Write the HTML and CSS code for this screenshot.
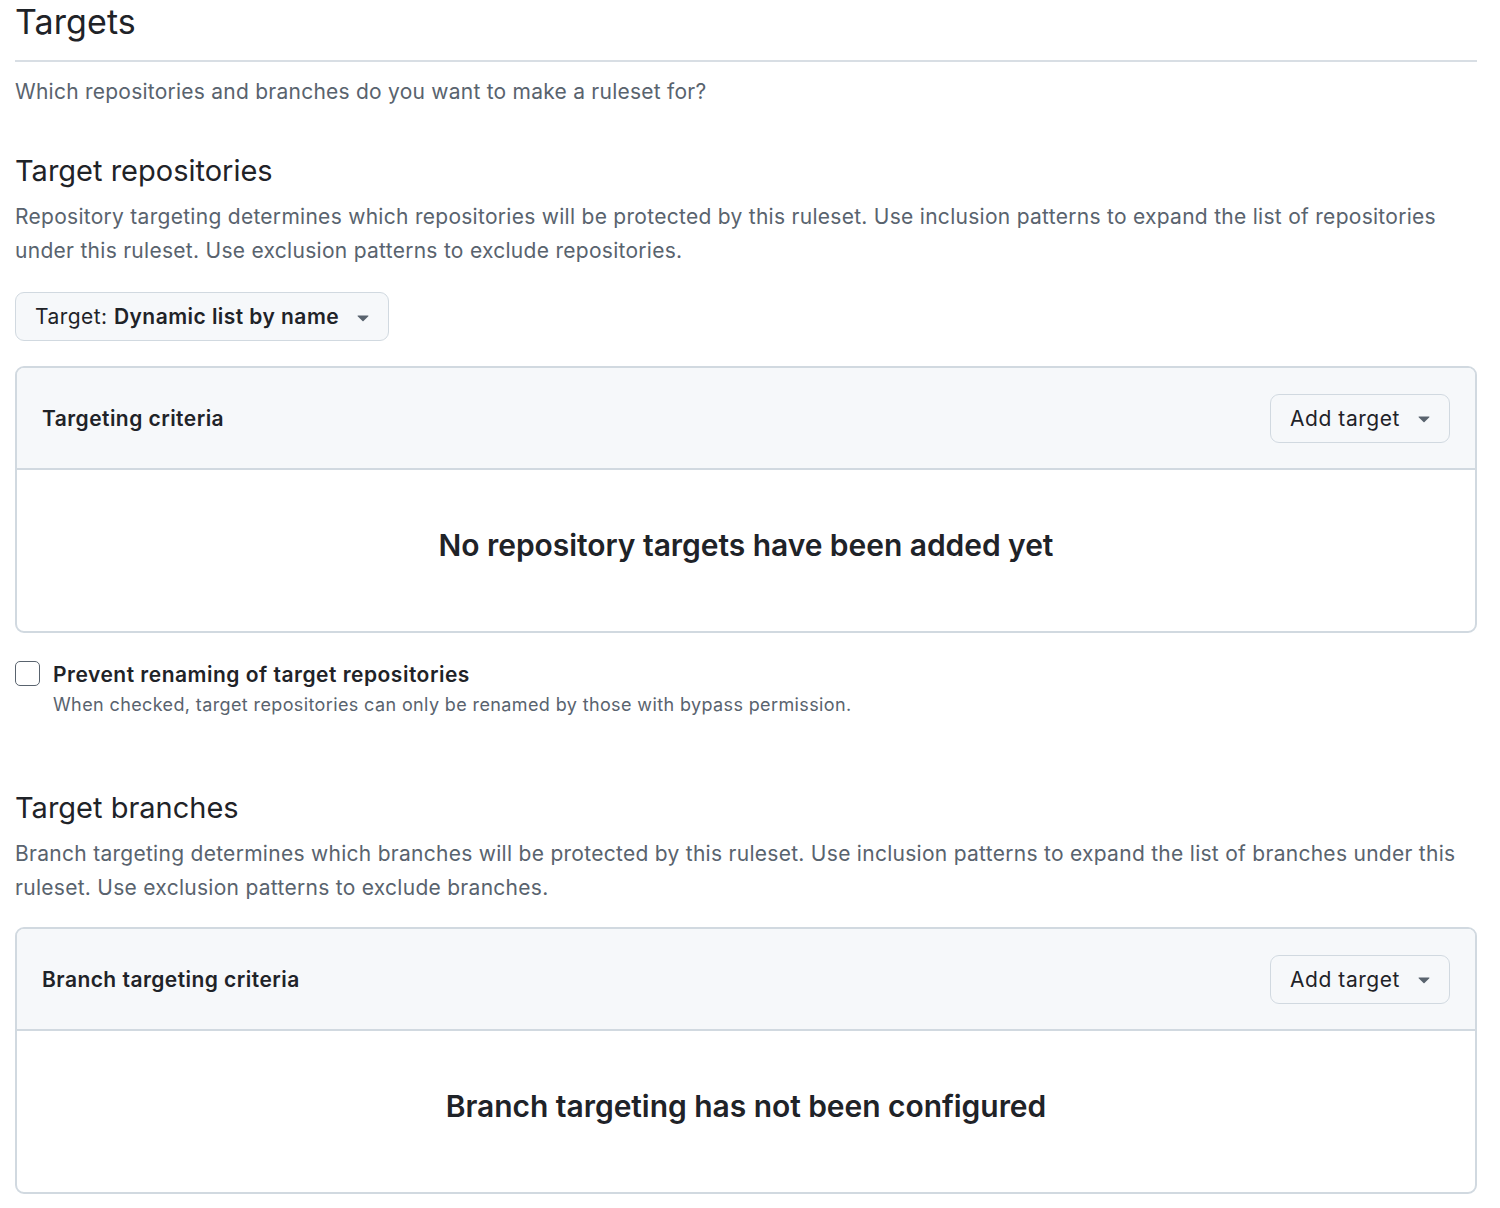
FILE: index.html
```html
<!DOCTYPE html>
<html lang="en">
<head>
<meta charset="utf-8">
<title>Targets</title>
<link rel="stylesheet" href="styles.css">
</head>
<body>
<main class="page">
  <header class="subhead">
    <h1 class="subhead-title">Targets</h1>
  </header>
  <p class="lead">Which repositories and branches do you want to make a ruleset for?</p>

  <section class="section">
    <h2 class="section-title">Target repositories</h2>
    <p class="section-desc">Repository targeting determines which repositories will be protected by this ruleset. Use inclusion patterns to expand the list of repositories under this ruleset. Use exclusion patterns to exclude repositories.</p>

    <button class="btn btn-target" type="button">
      <span>Target: <strong>Dynamic list by name</strong></span>
      <svg class="caret" viewBox="0 0 16 16" width="24" height="24" aria-hidden="true"><path d="m4.427 7.427 3.396 3.396a.25.25 0 0 0 .354 0l3.396-3.396A.25.25 0 0 0 11.396 7H4.604a.25.25 0 0 0-.177.427Z"/></svg>
    </button>

    <div class="panel">
      <div class="panel-head">
        <h3 class="panel-title">Targeting criteria</h3>
        <button class="btn btn-add" type="button">
          <span>Add target</span>
          <svg class="caret" viewBox="0 0 16 16" width="24" height="24" aria-hidden="true"><path d="m4.427 7.427 3.396 3.396a.25.25 0 0 0 .354 0l3.396-3.396A.25.25 0 0 0 11.396 7H4.604a.25.25 0 0 0-.177.427Z"/></svg>
        </button>
      </div>
      <div class="panel-body">
        <p class="blank-title">No repository targets have been added yet</p>
      </div>
    </div>

    <label class="check">
      <span class="check-box"></span>
      <span class="check-text">
        <span class="check-label">Prevent renaming of target repositories</span>
        <span class="check-hint">When checked, target repositories can only be renamed by those with bypass permission.</span>
      </span>
    </label>
  </section>

  <section class="section section-branches">
    <h2 class="section-title">Target branches</h2>
    <p class="section-desc">Branch targeting determines which branches will be protected by this ruleset. Use inclusion patterns to expand the list of branches under this ruleset. Use exclusion patterns to exclude branches.</p>

    <div class="panel">
      <div class="panel-head">
        <h3 class="panel-title">Branch targeting criteria</h3>
        <button class="btn btn-add" type="button">
          <span>Add target</span>
          <svg class="caret" viewBox="0 0 16 16" width="24" height="24" aria-hidden="true"><path d="m4.427 7.427 3.396 3.396a.25.25 0 0 0 .354 0l3.396-3.396A.25.25 0 0 0 11.396 7H4.604a.25.25 0 0 0-.177.427Z"/></svg>
        </button>
      </div>
      <div class="panel-body">
        <p class="blank-title">Branch targeting has not been configured</p>
      </div>
    </div>
  </section>
</main>
</body>
</html>
```

FILE: styles.css
```css
* {
  box-sizing: border-box;
}

html, body {
  margin: 0;
  padding: 0;
  background: #ffffff;
}

body {
  font-family: Inter, "Noto Sans", "Liberation Sans", sans-serif;
  color: #1f2328;
}

.page {
  width: 1477px;
  padding-left: 15px;
}

h1, h2, h3, p {
  margin: 0;
}

.subhead {
  border-bottom: 2px solid #d8dee4;
  height: 62px;
}

.subhead-title {
  font-size: 34px;
  font-weight: 400;
  line-height: 44px;
  letter-spacing: 0.1px;
}

.lead {
  font-size: 21px;
  line-height: 30px;
  color: #59636e;
  letter-spacing: 0.24px;
  margin-top: 15px;
}

.section {
  margin-top: 44px;
}

.section-title {
  font-size: 29px;
  font-weight: 400;
  line-height: 40px;
}

.section-desc {
  font-size: 21px;
  line-height: 34px;
  color: #59636e;
  letter-spacing: 0.28px;
  margin-top: 9px;
}

.btn {
  display: inline-flex;
  align-items: center;
  font-family: inherit;
  font-size: 21px;
  letter-spacing: 0.45px;
  color: #1f2328;
  background: #f6f8fa;
  border: 1.5px solid #d1d9e0;
  border-radius: 9px;
  cursor: pointer;
  height: 49px;
  padding: 0 13px 0 19px;
  gap: 12px;
}

.btn strong {
  font-weight: 600;
}

.caret {
  fill: #59636e;
  flex: none;
}

.btn-target {
  margin-top: 24px;
}

.panel {
  border: 2px solid #d1d9e0;
  border-radius: 9px;
  overflow: hidden;
}

.btn-target + .panel {
  margin-top: 25px;
}

.panel-head {
  height: 102px;
  background: #f6f8fa;
  border-bottom: 2px solid #d1d9e0;
  display: flex;
  align-items: center;
  justify-content: space-between;
  padding: 0 25px;
}

.panel-title {
  font-size: 21px;
  font-weight: 600;
  letter-spacing: 0.45px;
}

.btn-add {
  letter-spacing: 0.55px;
}

.panel-body {
  height: 161px;
  display: flex;
  align-items: center;
  justify-content: center;
  padding-bottom: 12px;
}

.blank-title {
  font-size: 30px;
  font-weight: 600;
  letter-spacing: -0.05px;
}

.check {
  display: flex;
  align-items: flex-start;
  gap: 13px;
  margin-top: 28px;
}

.check-box {
  flex: none;
  width: 25px;
  height: 25px;
  border: 1.5px solid #59636e;
  border-radius: 5px;
  background: #ffffff;
}

.check-text {
  display: flex;
  flex-direction: column;
}

.check-label {
  font-size: 21px;
  font-weight: 600;
  line-height: 28px;
  letter-spacing: 0.5px;
}

.check-hint {
  font-size: 18px;
  line-height: 32px;
  color: #59636e;
  letter-spacing: 0.38px;
}

.section-branches {
  margin-top: 67px;
}

.section-branches .section-desc {
  margin-bottom: 22px;
}
```
